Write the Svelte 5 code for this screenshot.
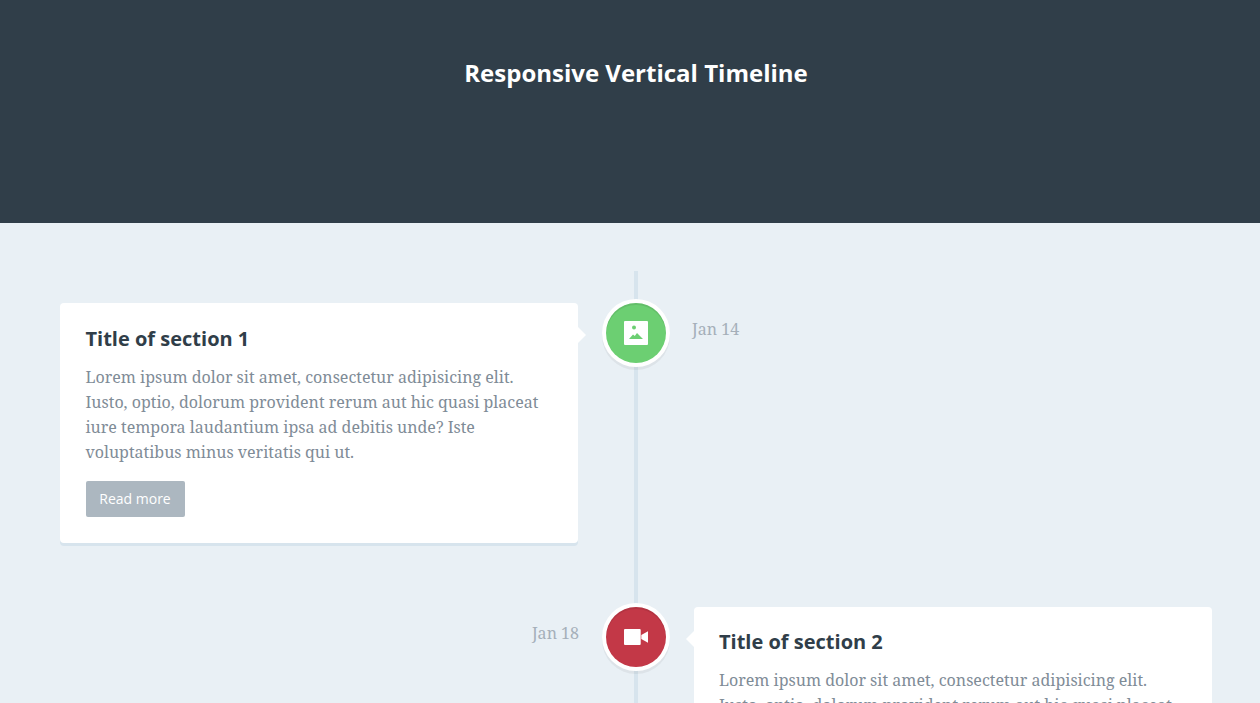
<script lang="ts">
  const items = [
    { id: 1, title: 'Title of section 1', date: 'Jan 14', kind: 'image', side: 'left' },
    { id: 2, title: 'Title of section 2', date: 'Jan 18', kind: 'video', side: 'right' }
  ];
</script>

<div class="page">
  <header class="hero">
    <h1>Responsive Vertical Timeline</h1>
  </header>

  <section class="timeline">
    {#each items as item (item.id)}
      <div class="block {item.side}">
        <div class="content">
          <h2>{item.title}</h2>
          <p>
            Lorem ipsum dolor sit amet, consectetur adipisicing elit. Iusto, optio, dolorum provident rerum aut hic quasi placeat iure tempora laudantium ipsa ad debitis unde? Iste voluptatibus minus veritatis qui ut.
          </p>
          <a class="more" href="#0">Read more</a>
        </div>
        <div class="icon {item.kind}">
          {#if item.kind === 'image'}
            <svg width="24" height="24" viewBox="0 0 24 24" aria-hidden="true">
              <path fill="#fff" d="M1 0h22a1 1 0 0 1 1 1v22a1 1 0 0 1-1 1H1a1 1 0 0 1-1-1V1a1 1 0 0 1 1-1z" />
              <circle cx="10" cy="6.500" r="2" fill="#6ccf72" />
              <path fill="#6ccf72" d="M5 18l4-4.500 1.800 1.500L13 12l6 6z" />
            </svg>
          {:else}
            <svg width="24" height="24" viewBox="0 0 24 24" aria-hidden="true">
              <path fill="#fff" d="M1 4h14.700a1 1 0 0 1 1 1v14a1 1 0 0 1-1 1H1a1 1 0 0 1-1-1V5a1 1 0 0 1 1-1z" />
              <path fill="#fff" d="M17.300 10L24 6.300v11.400L17.300 14z" />
            </svg>
          {/if}
        </div>
        <span class="date">{item.date}</span>
      </div>
    {/each}
  </section>
</div>

<style>
  :global(body) {
    margin: 0;
    overflow: hidden;
    background: #e9f0f5;
  }

  .page {
    height: 703px;
    overflow: hidden;
    background: #e9f0f5;
    font-family: "Noto Serif", "Liberation Serif", serif;
    color: #7f8c97;
  }

  .hero {
    box-sizing: border-box;
    height: 223px;
    padding-top: 55px;
    padding-left: 12px;
    background: #303e49;
    text-align: center;
  }

  h1 {
    margin: 0;
    color: #fff;
    font-family: "Open Sans", sans-serif;
    font-size: 24px;
    line-height: 35px;
    font-weight: 700;
  }

  .timeline {
    position: relative;
    width: 1152px;
    margin: 48px 0 0 60px;
    padding-top: 32px;
  }

  .timeline::before {
    content: '';
    position: absolute;
    top: 0;
    bottom: 0;
    left: 574px;
    width: 4px;
    background: #d7e4ed;
  }

  .block {
    position: relative;
    display: grid;
    grid-template-columns: 518px 116px 518px;
    align-items: start;
    margin-bottom: 64px;
  }

  .content {
    position: relative;
    box-sizing: border-box;
    height: 240px;
    padding: 22px 26px 26px 25.500px;
    border-radius: 4px;
    background: #fff;
    box-shadow: 0 3px 0 #d7e4ed;
  }

  .block.left .content {
    grid-column: 1;
    grid-row: 1;
  }

  .block.right .content {
    grid-column: 3;
    grid-row: 1;
    padding-top: 21px;
    padding-left: 25px;
  }

  .content::before {
    content: '';
    position: absolute;
    top: 24px;
    width: 0;
    height: 0;
    border: 8px solid transparent;
  }

  .block.left .content::before {
    left: 100%;
    border-left-color: #fff;
  }

  .block.right .content::before {
    right: 100%;
    border-right-color: #fff;
  }

  h2 {
    margin: 0;
    color: #303e49;
    font-family: "Open Sans", sans-serif;
    font-size: 20px;
    line-height: 28px;
    font-weight: 700;
  }

  p {
    margin: 12px 0 16px;
    font-size: 16px;
    line-height: 25px;
  }

  .more {
    display: inline-block;
    box-sizing: border-box;
    width: 99px;
    height: 36px;
    border-radius: 2px;
    background: #acb7c0;
    color: #fff;
    font-family: "Open Sans", sans-serif;
    font-size: 14px;
    line-height: 36px;
    text-align: center;
    text-decoration: none;
  }

  .icon {
    grid-column: 2;
    grid-row: 1;
    justify-self: center;
    display: flex;
    align-items: center;
    justify-content: center;
    width: 60px;
    height: 60px;
    border-radius: 50%;
    box-shadow: 0 0 0 4px #fff, inset 0 2px 0 rgba(0, 0, 0, 0.08), 0 3px 0 4px rgba(0, 0, 0, 0.05);
  }

  .icon.image {
    background: #6ccf72;
  }

  .icon.video {
    background: #c33847;
  }

  .date {
    font-size: 16px;
    line-height: 25px;
    color: #a5afb9;
    padding-top: 14px;
  }

  .block.left .date {
    grid-column: 3;
    grid-row: 1;
    margin-left: -2px;
  }

  .block.right .date {
    grid-column: 1;
    grid-row: 1;
    justify-self: end;
    margin-right: -1px;
  }
</style>
